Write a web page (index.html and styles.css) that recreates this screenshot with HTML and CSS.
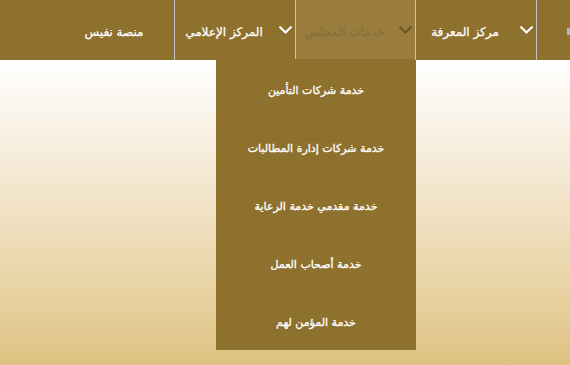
FILE: index.html
```html
<!DOCTYPE html>
<html lang="ar">
<head>
<meta charset="utf-8">
<title>نفيس</title>
<link rel="stylesheet" href="styles.css">
</head>
<body>
<header class="navbar">
  <nav class="menu">
    <div class="item plain"><span class="label">منصة نفيس</span></div>
    <div class="item sep">
      <svg class="chev" viewBox="0 0 13 8" width="13" height="8"><path d="M1.2 1.2 L6.5 6.5 L11.8 1.2"/></svg>
      <span class="label">المركز الإعلامي</span>
    </div>
    <div class="item sep active">
      <svg class="chev" viewBox="0 0 13 8" width="13" height="8"><path d="M1.2 1.2 L6.5 6.5 L11.8 1.2"/></svg>
      <span class="label">خدمات المجلس</span>
      <ul class="dropdown">
        <li>خدمة شركات التأمين</li>
        <li>خدمة شركات إدارة المطالبات</li>
        <li>خدمة مقدمي خدمة الرعاية</li>
        <li>خدمة أصحاب العمل</li>
        <li>خدمة المؤمن لهم</li>
      </ul>
    </div>
    <div class="item sep">
      <svg class="chev" viewBox="0 0 13 8" width="13" height="8"><path d="M1.2 1.2 L6.5 6.5 L11.8 1.2"/></svg>
      <span class="label">مركز المعرفة</span>
    </div>
    <div class="item sep partial">
      <span class="sliver"></span>
    </div>
  </nav>
</header>
<main class="page"></main>
</body>
</html>
```
FILE: styles.css
```css
html, body {
  margin: 0;
  padding: 0;
  width: 570px;
  height: 365px;
  overflow: hidden;
}
body {
  font-family: "DejaVu Sans", "Noto Sans", sans-serif;
  background: #ffffff;
}
.navbar {
  height: 60px;
  background: #8f712e;
  position: relative;
  z-index: 2;
}
.menu {
  display: flex;
  height: 60px;
  padding-left: 54px;
  width: 800px;
}
.item {
  box-sizing: border-box;
  position: relative;
  flex: 0 0 auto;
  width: 121px;
  height: 60px;
  display: flex;
  flex-direction: row;
  align-items: center;
  color: #ffffff;
  font-size: 12px;
  font-weight: normal;
  -webkit-text-stroke: 0.25px currentColor;
  padding-right: 3px;
  direction: ltr;
}
.item.plain {
  width: 120px;
  padding-right: 0;
}
.item.sep {
  border-left: 1px solid #c3c4c6;
}
.label {
  flex: 1 1 auto;
  text-align: center;
  direction: rtl;
  white-space: nowrap;
  margin-top: 4px;
}
.item.sep .label {
  order: 1;
  margin-right: 6px;
}
.chev {
  order: 2;
  flex: 0 0 13px;
  fill: none;
  stroke: #ffffff;
  stroke-width: 2.2;
  stroke-linecap: round;
  stroke-linejoin: round;
}
.item.active {
  background: #9a7d3e;
  border-right: 1px solid #c3c4c6;
  height: 59px;
  margin-right: -1px;
}
.item.active .label {
  color: #86703a;
}
.item.active .chev {
  stroke: #6a5524;
}
.sliver {
  display: block;
  width: 3px;
  height: 7px;
  margin-left: 30px;
  margin-top: 3px;
  background: #aab6c8;
}
.dropdown {
  position: absolute;
  top: 60px;
  right: -1px;
  width: 200px;
  margin: 0;
  padding: 0;
  list-style: none;
  background: #8f712e;
  direction: rtl;
  -webkit-text-stroke: 0;
}
.dropdown li {
  height: 58px;
  display: flex;
  align-items: center;
  justify-content: center;
  color: #ffffff;
  font-size: 11px;
  font-weight: normal;
  -webkit-text-stroke: 0.3px #ffffff;
  white-space: nowrap;
  padding-top: 2px;
  box-sizing: border-box;
}
.page {
  height: 305px;
  background: linear-gradient(180deg, #ffffff 0%, #f5ead6 35%, #ead6aa 70%, #dfc282 100%);
}
```
